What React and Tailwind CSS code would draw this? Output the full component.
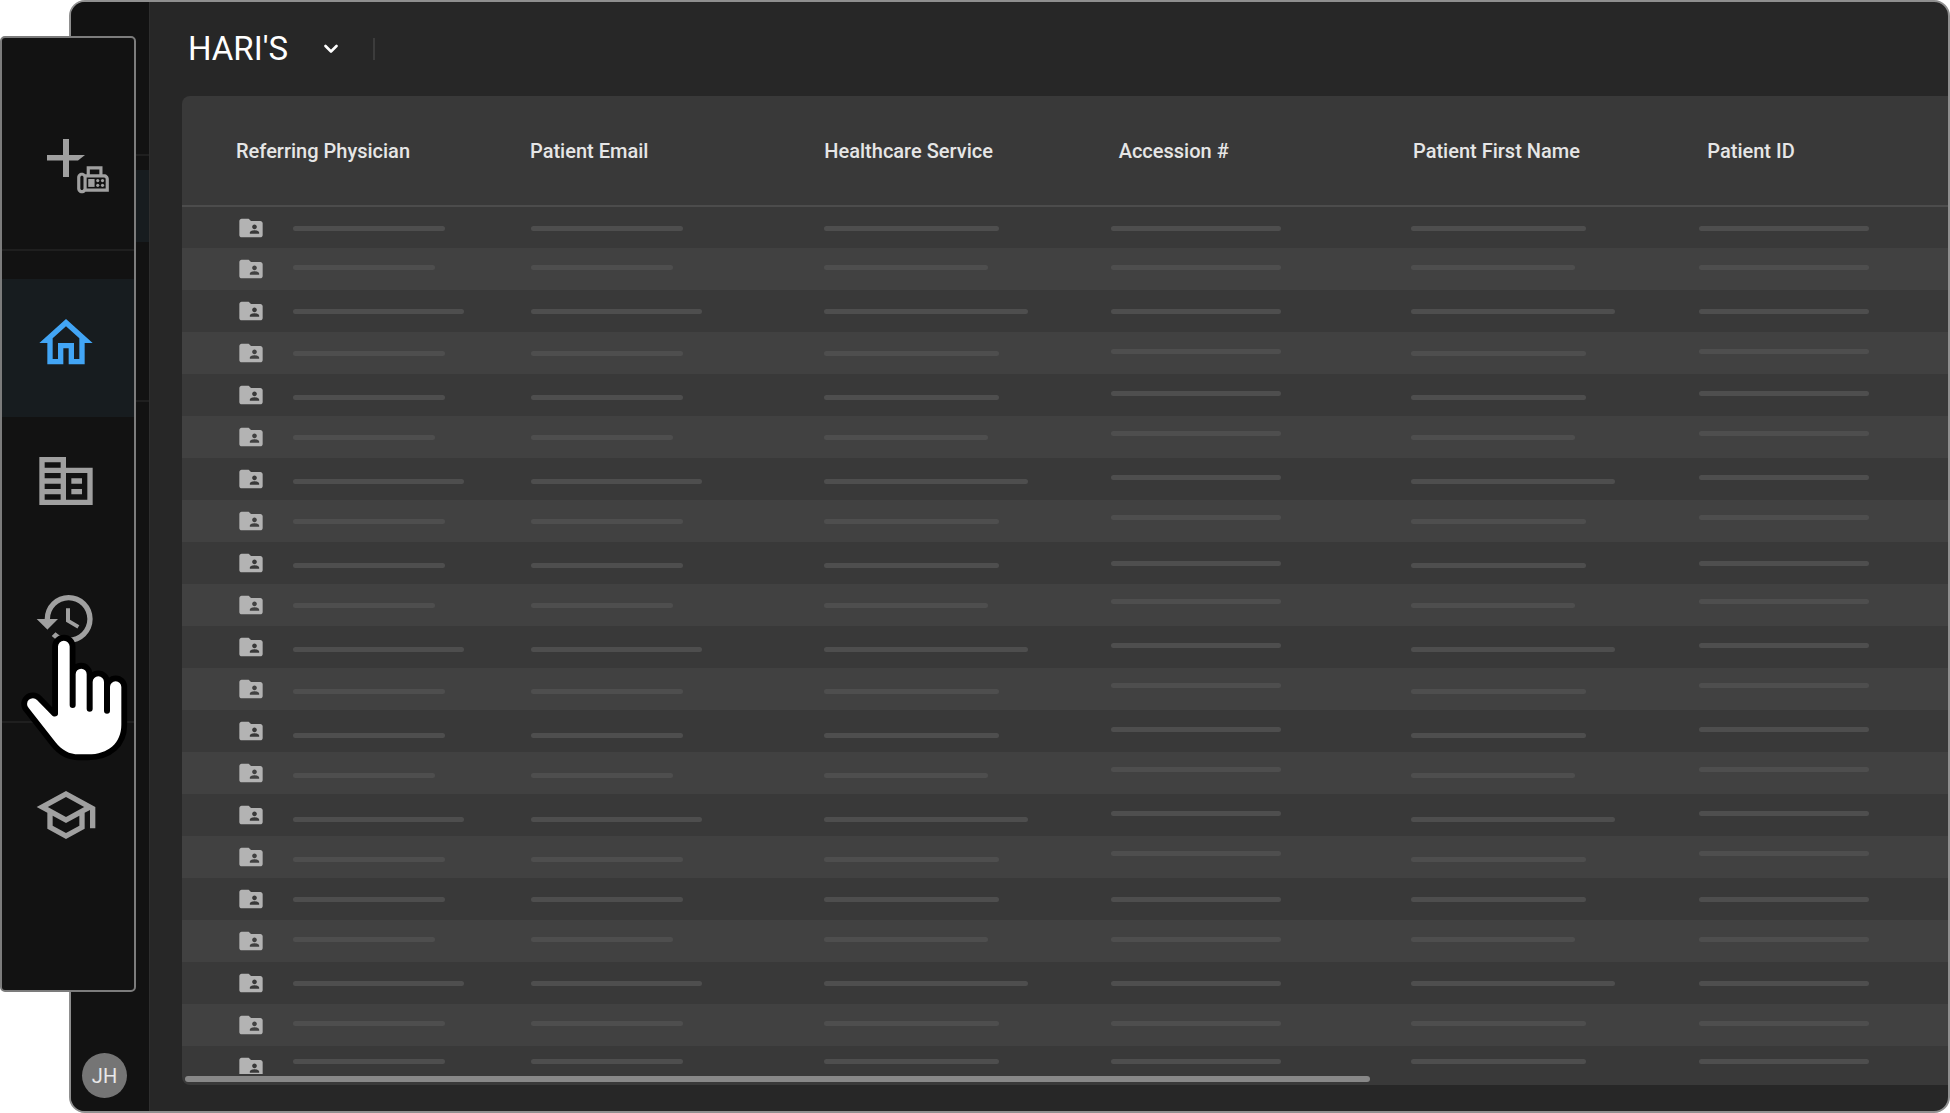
import clsx from "clsx";
import {
  MdFolderShared,
  MdHistory,
  MdOutlineFax,
  MdOutlineHome,
  MdOutlineSchool,
} from "react-icons/md";

const COLUMNS = [
  { title: "Referring Physician", kind: "short", cell: "" },
  { title: "Patient Email", kind: "short", cell: "pl-4" },
  { title: "Healthcare Service", kind: "wide", cell: "pl-[15px]" },
  { title: "Accession #", kind: "fixed", cell: "pl-[7px]" },
  { title: "Patient First Name", kind: "wide", cell: "pl-[13px]" },
  { title: "Patient ID", kind: "fixed", cell: "pl-[7px]" },
];

// Bar widths repeat every four rows
const BAR_WIDTHS = {
  short: ["w-[152px]", "w-[142px]", "w-[171px]", "w-[152px]"],
  wide: ["w-[175px]", "w-[164px]", "w-[204px]", "w-[175px]"],
  fixed: ["w-[170px]", "w-[170px]", "w-[170px]", "w-[170px]"],
};

// Baseline of the placeholder text: [regular columns, fixed columns]
const ROWS = [
  ["pt-4.5", "pt-4.5"],
  ["pt-4", "pt-4"],
  ["pt-4.5", "pt-4.5"],
  ["pt-4.5", "pt-4"],
  ["pt-5", "pt-4"],
  ["pt-4.5", "pt-3.5"],
  ["pt-5", "pt-4"],
  ["pt-4.5", "pt-3.5"],
  ["pt-5", "pt-4.5"],
  ["pt-4.5", "pt-3.5"],
  ["pt-5", "pt-4"],
  ["pt-5", "pt-3.5"],
  ["pt-5.5", "pt-4"],
  ["pt-5", "pt-3.5"],
  ["pt-5.5", "pt-4"],
  ["pt-5", "pt-3.5"],
  ["pt-4.5", "pt-4.5"],
  ["pt-4", "pt-4"],
  ["pt-4.5", "pt-4.5"],
  ["pt-4", "pt-4"],
  ["pt-3", "pt-3"],
];

const Bar = ({ kind, row }) => (
  <div
    className={clsx(
      "mt-px h-[5px] rounded-full bg-[#4e4e4e]",
      BAR_WIDTHS[kind][row % 4]
    )}
  />
);

const OfficeIcon = ({ size }) => (
  <svg width={size} height={size} viewBox="0 0 24 24" fill="currentColor">
    <path d="M12 7V3H2v18h20V7H12zM10 19H4v-2h6v2zm0-4H4v-2h6v2zm0-4H4V9h6v2zm0-4H4V5h6v2zm10 12h-8V9h8v10zm-2-8h-4v2h4v-2zm0 4h-4v2h4v-2z" />
  </svg>
);

const NavItem = ({ icon: Icon, label, active }) => (
  <a
    href="#"
    aria-label={label}
    className={clsx(
      "flex h-[138px] items-center justify-center pr-1 pb-2.5",
      active ? "bg-[#171c1f] text-[#42a5f5]" : "text-[#a0a0a0]"
    )}
  >
    <Icon size={64} />
  </a>
);

const Sidebar = () => (
  <nav className="absolute top-9 left-0 w-[136px] rounded-[5px] border-2 border-[#7c7c7c] bg-[#121212] pb-[101px]">
    <button
      type="button"
      aria-label="New fax order"
      className="relative block h-[211px] w-full text-[#a0a0a0]"
    >
      <svg
        className="absolute top-[101px] left-[45px]"
        width="38"
        height="38"
        viewBox="0 0 38 38"
        fill="currentColor"
      >
        <path d="M16 0h6v16h16l-7 5.500h-9V38h-6V21.500H0V16h16z" />
      </svg>
      <MdOutlineFax size={38} className="absolute top-[122px] left-[72px]" />
    </button>
    <div className="border-t-2 border-[#1f1f1f] pt-7 pb-7">
      <NavItem icon={MdOutlineHome} label="Home" active />
      <NavItem icon={OfficeIcon} label="Organizations" />
      <NavItem icon={MdHistory} label="History" />
    </div>
    <div className="border-t-2 border-[#1f1f1f] pt-7">
      <NavItem icon={MdOutlineSchool} label="Learning" />
    </div>
  </nav>
);

const Rail = () => (
  <div className="flex w-[79px] shrink-0 flex-col border-r border-[#2e2e2e] bg-[#121212]">
    <div className="h-[154px] border-b-2 border-[#1f1f1f]" />
    <div className="h-[246px] border-b-2 border-[#1f1f1f] pt-3.5">
      <div className="h-[72px] bg-[#171c1f]" />
    </div>
    <div className="mt-auto mb-[13px] ml-[11px] flex size-[45px] items-center justify-center rounded-full bg-[#757575] text-xl text-[#e8e8e8]">
      JH
    </div>
  </div>
);

const Worklist = () => (
  <div className="flex min-h-0 flex-1 flex-col rounded-l-lg bg-[#393939]">
    <div className="min-h-0 flex-1 overflow-hidden">
      <table className="w-full table-fixed border-collapse">
        <colgroup>
          <col className="w-[333px]" />
          <col className="w-1/6" />
          <col className="w-1/6" />
          <col className="w-1/6" />
          <col className="w-1/6" />
          <col />
        </colgroup>
        <thead>
          <tr className="h-[110px] border-b-2 border-[#4c4c4c]">
            {COLUMNS.map((column, i) => (
              <th
                key={column.title}
                className={clsx(
                  "text-left text-xl font-medium text-[#e6e6e6]",
                  i === 0 ? "pl-[54px]" : "pl-[15px]"
                )}
              >
                {column.title}
              </th>
            ))}
          </tr>
        </thead>
        <tbody>
          {ROWS.map(([regular, fixed], row) => (
            <tr key={row} className="h-[42px] even:bg-[#414141]">
              {COLUMNS.map((column, i) => (
                <td key={column.title} className={clsx("p-0 align-top", column.cell)}>
                  {i === 0 ? (
                    <div className="flex gap-7 pl-[55px]">
                      <MdFolderShared size={28} className="mt-[7px] text-[#b3b3b3]" />
                      <div className={regular}>
                        <Bar kind={column.kind} row={row} />
                      </div>
                    </div>
                  ) : (
                    <div className={column.kind === "fixed" ? fixed : regular}>
                      <Bar kind={column.kind} row={row} />
                    </div>
                  )}
                </td>
              ))}
            </tr>
          ))}
        </tbody>
      </table>
    </div>
    {/* Horizontal scroll track */}
    <div className="pt-0.5 pb-[3px] pl-[3px]">
      <div className="h-1.5 w-[67.2%] rounded-full bg-[#888888]" />
    </div>
  </div>
);

const HandCursor = () => (
  <svg
    className="pointer-events-none absolute top-[633px] left-5"
    width="109"
    height="129"
    viewBox="60 220 327 387"
  >
    <path
      d="M174 463V260.500a17.500 17.500 0 0 1 35 0V436a9 9 0 0 0 18 0V343.500a16.500 16.500 0 0 1 33 0V447a9 9 0 0 0 18 0V367a17 17 0 0 1 34 0V453a9 9 0 0 0 18 0V382a17 17 0 0 1 34 0V495C364 550 325 584 264 584H236C208 584 186 572 166 547L86 445A17 17 0 0 1 111 421L155 466C162 474 174 470 174 463Z"
      fill="#ffffff"
      stroke="#000000"
      strokeWidth="35"
      strokeLinejoin="round"
      paintOrder="stroke"
    />
  </svg>
);

const App = () => {
  return (
    <div className="relative h-screen bg-white pl-[69px] font-[Roboto,sans-serif]">
      <div className="flex h-full overflow-hidden rounded-2xl border-2 border-[#8f8f8f] bg-[#272727]">
        <Rail />
        <main className="flex min-w-0 flex-1 flex-col pb-[26px] pl-8">
          <header className="flex h-[94px] shrink-0 items-center pl-1.5">
            <button type="button" className="flex items-center gap-9 text-white">
              <span className="text-[33px]">HARI'S</span>
              <svg width="14" height="10" viewBox="0 0 14 10" fill="none">
                <path
                  d="M1.500 2L7 7.500L12.500 2"
                  stroke="currentColor"
                  strokeWidth="2.600"
                  strokeLinecap="round"
                  strokeLinejoin="round"
                />
              </svg>
            </button>
            <div className="ml-[35px] h-[22px] w-0.5 bg-[#3c3c3c]" />
          </header>
          <Worklist />
        </main>
      </div>
      <Sidebar />
      <HandCursor />
    </div>
  );
};

export default App;
